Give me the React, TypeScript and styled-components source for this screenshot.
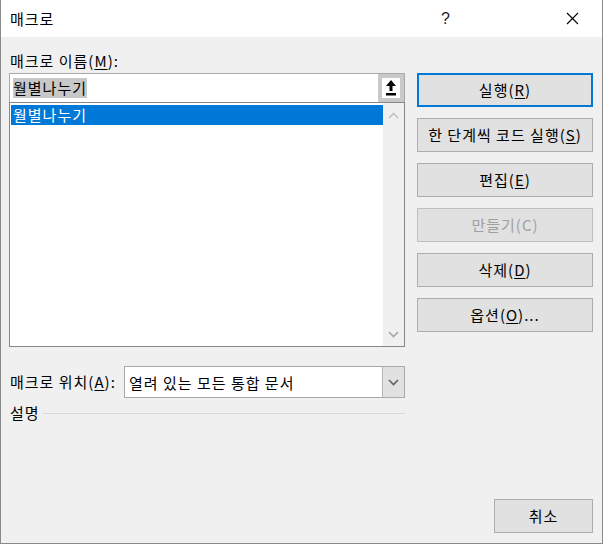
import styled, { createGlobalStyle } from "styled-components";

const GlobalStyle = createGlobalStyle`
  html, body {
    margin: 0;
    padding: 0;
    background: #ffffff;
  }
  body {
    font-family: "Noto Sans CJK KR", "Noto Sans", sans-serif;
    font-size: 15px;
    letter-spacing: 1px;
    color: #000;
  }
`;

const Window = styled.div`
  width: 603px;
  height: 544px;
  box-sizing: border-box;
  border: 1px solid #8a8a8a;
  border-top: none;
  display: flex;
  flex-direction: column;
  background: #f0f0f0;
`;

const TitleBar = styled.div`
  height: 37px;
  background: #ffffff;
  display: flex;
  align-items: center;
  padding-left: 9px;
  flex-shrink: 0;
`;

const Title = styled.div`
  font-size: 15px;
  line-height: 20px;
  flex: 1;
`;

const CaptionButton = styled.div<{ $width: number }>`
  width: ${(p) => p.$width}px;
  height: 37px;
  display: flex;
  align-items: center;
  justify-content: center;
  font-family: "Liberation Sans", sans-serif;
  font-size: 16px;
  color: #222;
`;

const Body = styled.div`
  flex: 1;
  display: flex;
  flex-direction: column;
  padding: 14px 9px 10px 8px;
`;

const Main = styled.div`
  display: grid;
  grid-template-columns: 396px 176px;
  column-gap: 12px;
`;

const LeftColumn = styled.div`
  display: flex;
  flex-direction: column;
`;

const Label = styled.div`
  line-height: 20px;
  height: 20px;
  padding-left: 1px;
  white-space: nowrap;
`;

const NameInput = styled.div`
  margin-top: 2px;
  height: 29px;
  box-sizing: border-box;
  border: 1px solid #a9a9a9;
  border-bottom: none;
  background: #ffffff;
  display: flex;
  align-items: stretch;
`;

const InputText = styled.div`
  flex: 1;
  display: flex;
  align-items: center;
  padding-left: 3px;
`;

const Highlight = styled.span`
  background: #c8c8c8;
  line-height: 20px;
`;

const UploadButton = styled.div`
  width: 26px;
  box-sizing: border-box;
  background: #c9c9c9;
  padding: 4px 4px 4px 4px;
  display: flex;
`;

const UploadFace = styled.div`
  flex: 1;
  background: #ffffff;
  display: flex;
  align-items: center;
  justify-content: center;
`;

const MacroList = styled.div`
  height: 245px;
  box-sizing: border-box;
  border: 1px solid #828790;
  background: #ffffff;
  display: flex;
`;

const ListItems = styled.div`
  flex: 1;
  padding: 2px 0 0 1px;
`;

const ListItem = styled.div<{ $selected?: boolean }>`
  height: 20px;
  line-height: 20px;
  padding-left: 2px;
  background: ${(p) => (p.$selected ? "#0078d7" : "transparent")};
  color: ${(p) => (p.$selected ? "#ffffff" : "#000")};
`;

const ScrollTrack = styled.div`
  width: 21px;
  background: #f0f0f0;
  display: flex;
  flex-direction: column;
  justify-content: space-between;
  align-items: center;
  padding: 9px 0 8px;
`;

const LocationRow = styled.div`
  margin-top: 19px;
  display: grid;
  grid-template-columns: 115px 281px;
  align-items: center;
`;

const Combo = styled.div`
  height: 32px;
  box-sizing: border-box;
  border: 1px solid #a9a9a9;
  background: #ffffff;
  display: flex;
`;

const ComboText = styled.div`
  flex: 1;
  display: flex;
  align-items: center;
  padding-left: 4px;
`;

const ComboArrow = styled.div`
  width: 21px;
  background: #e1e1e1;
  border-left: 1px solid #b5b5b5;
  display: flex;
  align-items: center;
  justify-content: center;
`;

const DescRow = styled.div`
  margin-top: 5px;
  display: flex;
  align-items: center;
  gap: 3px;
  line-height: 20px;
  padding-left: 1px;
`;

const Rule = styled.div`
  flex: 1;
  height: 1px;
  background: #dadada;
`;

const ButtonColumn = styled.div`
  padding-top: 22px;
  display: flex;
  flex-direction: column;
  gap: 11px;
`;

const Button = styled.div<{ $default?: boolean; $disabled?: boolean; $width?: number }>`
  height: 34px;
  ${(p) => (p.$width ? `width: ${p.$width}px;` : "")}
  box-sizing: border-box;
  background: #e1e1e1;
  border: ${(p) =>
    p.$default ? "2px solid #0078d7" : `1px solid ${p.$disabled ? "#bfbfbf" : "#adadad"}`};
  color: ${(p) => (p.$disabled ? "#a0a0a0" : "#000")};
  display: flex;
  align-items: center;
  justify-content: center;
  line-height: 20px;
  white-space: nowrap;
`;

const Footer = styled.div`
  margin-top: auto;
  display: flex;
  justify-content: flex-end;
`;

const Key = styled.u`
  text-decoration: underline;
  text-underline-offset: 2px;
  text-decoration-thickness: 1px;
`;

const Chevron = ({ up, color }: { up?: boolean; color: string }) => (
  <svg width="11" height="7" viewBox="0 0 11 7">
    <polyline
      points={up ? "1,6 5.5,1.5 10,6" : "1,1 5.5,5.5 10,1"}
      fill="none"
      stroke={color}
      strokeWidth="1.6"
    />
  </svg>
);

const UploadIcon = () => (
  <svg width="12" height="16" viewBox="0 0 12 16">
    <polygon points="6,0 11,6 7.5,6 7.5,11 4.5,11 4.5,6 1,6" fill="#000" />
    <rect x="1" y="13" width="10" height="2.5" fill="#000" />
  </svg>
);

const CloseIcon = () => (
  <svg width="13" height="13" viewBox="0 0 13 13">
    <path d="M1 1 L12 12 M12 1 L1 12" stroke="#000" strokeWidth="1.1" />
  </svg>
);

export default function App() {
  return (
    <>
      <GlobalStyle />
      <Window>
        <TitleBar>
          <Title>매크로</Title>
          <CaptionButton $width={46}>?</CaptionButton>
          <div style={{ width: 80 }} />
          <CaptionButton $width={46}>
            <CloseIcon />
          </CaptionButton>
          <div style={{ width: 7 }} />
        </TitleBar>
        <Body>
          <Main>
            <LeftColumn>
              <Label>
                매크로 이름(<Key>M</Key>):
              </Label>
              <NameInput>
                <InputText>
                  <Highlight>월별나누기</Highlight>
                </InputText>
                <UploadButton>
                  <UploadFace>
                    <UploadIcon />
                  </UploadFace>
                </UploadButton>
              </NameInput>
              <MacroList>
                <ListItems>
                  <ListItem $selected>월별나누기</ListItem>
                </ListItems>
                <ScrollTrack>
                  <Chevron up color="#c2c2c2" />
                  <Chevron color="#a6a6a6" />
                </ScrollTrack>
              </MacroList>
              <LocationRow>
                <Label>
                  매크로 위치(<Key>A</Key>):
                </Label>
                <Combo>
                  <ComboText>열려 있는 모든 통합 문서</ComboText>
                  <ComboArrow>
                    <Chevron color="#606060" />
                  </ComboArrow>
                </Combo>
              </LocationRow>
              <DescRow>
                설명
                <Rule />
              </DescRow>
            </LeftColumn>
            <ButtonColumn>
              <Button $default>
                실행(<Key>R</Key>)
              </Button>
              <Button>
                한 단계씩 코드 실행(<Key>S</Key>)
              </Button>
              <Button>
                편집(<Key>E</Key>)
              </Button>
              <Button $disabled>만들기(C)</Button>
              <Button>
                삭제(<Key>D</Key>)
              </Button>
              <Button>
                옵션(<Key>O</Key>)...
              </Button>
            </ButtonColumn>
          </Main>
          <Footer>
            <Button $width={99}>취소</Button>
          </Footer>
        </Body>
      </Window>
    </>
  );
}
